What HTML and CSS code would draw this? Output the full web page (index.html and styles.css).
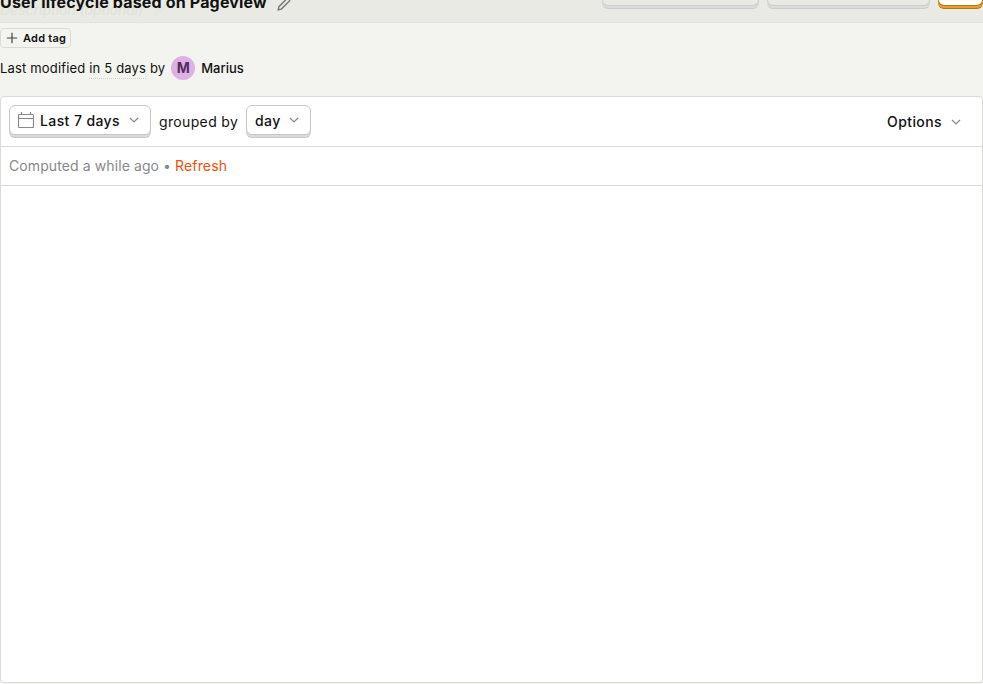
FILE: index.html
```html
<!DOCTYPE html>
<html lang="en">
<head>
<meta charset="utf-8">
<title>User lifecycle based on Pageview</title>
<link rel="stylesheet" href="styles.css">
</head>
<body>
<header class="topbar">
  <div class="heading">
    <div class="title-row">
      <h1 class="title">User lifecycle based on Pageview</h1>
      <svg class="pencil" width="14" height="14" viewBox="0 0 14 14"><path d="M1.200 12.800l.7-3.100L10 1.600a1 1 0 0 1 1.400 0l1 1a1 1 0 0 1 0 1.400L4.300 12.100z"/></svg>
    </div>
    <div class="description"><span>Description (optional)</span><svg width="12" height="12" viewBox="0 0 14 14"><path d="M1.200 12.800l.7-3.100L10 1.600a1 1 0 0 1 1.400 0l1 1a1 1 0 0 1 0 1.400L4.300 12.100z"/></svg></div>
  </div>
  <div class="actions">
    <span class="action wide-a"></span>
    <span class="action wide-b"></span>
    <span class="action primary"></span>
  </div>
</header>
<section class="meta">
  <button class="tag"><svg width="12" height="12" viewBox="0 0 12 12"><path d="M6 .8v10.400M.8 6h10.400"/></svg><span>Add tag</span></button>
  <div class="modified"><span class="last">Last modified <span class="when">in 5 days</span> by</span><span class="avatar">M</span><span class="name">Marius</span></div>
</section>
<main class="card">
  <div class="filters">
    <button class="select range"><svg class="cal" width="16" height="17" viewBox="0 0 16 17"><path d="M1.500 2.500h13q1 0 1 1v11q0 1-1 1h-13q-1 0-1-1v-11q0-1 1-1zM.5 6.500h15M3.500 0v2.500M12.500 0v2.500"/></svg><span class="value">Last 7 days</span><svg class="chev" width="10" height="6" viewBox="0 0 10 6"><path d="M1 1l4 4 4-4"/></svg></button>
    <span class="by">grouped by</span>
    <button class="select interval"><span class="value">day</span><svg class="chev" width="10" height="6" viewBox="0 0 10 6"><path d="M1 1l4 4 4-4"/></svg></button>
    <button class="options"><span>Options</span><svg class="chev" width="10" height="6" viewBox="0 0 10 6"><path d="M1 1l4 4 4-4"/></svg></button>
  </div>
  <div class="computed"><span class="ago">Computed a while ago</span><span class="dot">•</span><a class="refresh">Refresh</a></div>
</main>
</body>
</html>
```
FILE: styles.css
```css
* { box-sizing: border-box; }
body { margin: 0; height: 684px; overflow: hidden; background: #f3f4ef; color: #111; font: 14px/20px Inter, sans-serif; }
button { font: inherit; color: inherit; background: none; border: 0; padding: 0; }
svg { fill: none; stroke: #888; stroke-width: 1.2; flex: none; }
.topbar { display: flex; height: 23px; background: #e9eae4; border-bottom: 1px solid #e0e1dc; }
.title-row { display: flex; position: relative; z-index: 1; height: 12px; }
.title { margin: -8px 0 0; font-size: 16px; line-height: 20px; font-weight: 700; letter-spacing: .17px; white-space: nowrap; }
.pencil { margin: -3px 0 0 10px; stroke: #777; stroke-width: 1.4; }
.description { display: flex; align-items: center; gap: 11px; margin-top: -12px; color: #e0e1db; font-size: 14px; line-height: 20px; font-style: italic; }
.description svg { stroke: #e3e4de; }
.actions { display: flex; gap: 8px; margin-left: auto; }
.action { height: 6px; border: 1px solid #cfcccd; border-top: 0; border-radius: 0 0 6px 6px; box-shadow: 0 2px 0 #dddcdb, 0 3px 0 #cfcccd; }
.wide-a { width: 157px; }
.wide-b { width: 163px; }
.primary { width: 45px; background: #fff; border-color: #b17816; box-shadow: 0 2px 0 #eb9d2a, 0 3px 0 #b17816; }
.meta { height: 73px; padding-top: 5px; }
.tag { display: flex; align-items: center; gap: 5px; width: 71px; height: 20px; padding-left: 5px; border: 1px solid #dadbd3; border-radius: 4px; font-size: 11px; font-weight: 600; letter-spacing: .25px; white-space: nowrap; }
.tag svg { stroke: #444; }
.modified { display: flex; align-items: center; gap: 6px; height: 24px; margin-top: 8px; font-size: 13px; line-height: 20px; }
.last { letter-spacing: .17px; }
.when { padding-bottom: 2px; border-bottom: 1px dotted #cfd0ca; }
.avatar { width: 24px; height: 24px; border-radius: 50%; background: #dcb1e3; color: #572a60; text-align: center; font-size: 14px; line-height: 24px; font-weight: 700; }
.name { font-weight: 500; letter-spacing: 0; }
.card { height: 587px; background: #fff; border: 1px solid #dadbd3; border-radius: 4px; }
.filters { display: flex; align-items: center; height: 50px; padding: 0 21px 0 8px; border-bottom: 1px solid #dadbd3; }
.select { display: flex; align-items: center; height: 30px; margin-bottom: 3px; padding: 0 8px; background: #fff; border: 1px solid #c9c6c9; border-radius: 6px; box-shadow: 0 2px 0 #dddadc, 0 3px 0 #c9c6c9; font-weight: 500; letter-spacing: .4px; }
.value { padding-top: 2px; }
.range { width: 142px; }
.interval { width: 65px; }
.cal { margin-right: 6px; }
.chev { margin-left: auto; margin-right: 3px; }
.by { margin: 0 8px; width: 79px; letter-spacing: .35px; white-space: nowrap; }
.options { display: flex; align-items: center; gap: 9px; margin-left: auto; font-weight: 500; letter-spacing: .4px; }
.options .chev { margin: 0; }
.computed { height: 39px; padding: 9px 8px; border-bottom: 1px solid #dadbd3; color: #888; }
.ago { letter-spacing: .1px; }
.dot { margin: 0 4px; }
.refresh { color: #f54e00; letter-spacing: .17px; }
```
